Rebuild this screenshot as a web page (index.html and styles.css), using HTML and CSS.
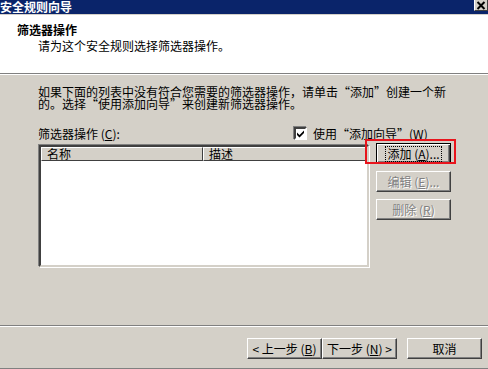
FILE: index.html
```html
<!DOCTYPE html>
<html lang="zh-CN">
<head>
    <meta charset="UTF-8">
    <title>安全规则向导</title>
    <link rel="stylesheet" href="styles.css">
</head>
<body>
    <div class="window">
        <div class="titlebar">
            <span class="title-text">安全规则向导</span>
            <span class="close-btn">
                <svg width="10" height="9" viewBox="0 0 10 9"><path d="M1.5 1 L8.5 8 M8.5 1 L1.5 8" stroke="#000" stroke-width="2" fill="none"/></svg>
            </span>
        </div>

        <div class="header">
            <div class="header-title">筛选器操作</div>
            <div class="header-sub">请为这个安全规则选择筛选器操作。</div>
        </div>

        <div class="content">
            <p class="intro">如果下面的列表中没有符合您需要的筛选器操作，请单击<span class="q q-open">“</span>添加<span class="q q-close">”</span>创建一个新<br>的。选择<span class="q q-open">“</span>使用添加向导<span class="q q-close">”</span>来创建新筛选器操作。</p>

            <div class="label-row">
                <span class="list-label">筛选器操作 (<u>C</u>):</span>
                <span class="check-group">
                    <span class="checkbox">
                        <svg width="9" height="9" viewBox="0 0 9 9"><path d="M1 3.5 L3.5 6 L8 1.5 L8 4 L3.5 8.5 L1 6 Z" fill="#000"/></svg>
                    </span>
                    <span>使用<span class="q q-open">“</span>添加向导<span class="q q-close">”</span>(<u>W</u>)</span>
                </span>
            </div>

            <div class="list-row">
                <div class="listbox">
                    <div class="list-head">
                        <div class="col col-name">名称</div>
                        <div class="col col-desc">描述</div>
                    </div>
                </div>
                <div class="side-buttons">
                    <div class="highlight"></div>
                    <button class="btn btn-default"><span class="focus">添加 (<u>A</u>)...</span></button>
                    <button class="btn" disabled>编辑 (<u>E</u>)...</button>
                    <button class="btn" disabled>删除 (<u>R</u>)</button>
                </div>
            </div>
        </div>

        <div class="footer">
            <button class="btn">&lt; 上一步 (<u>B</u>)</button>
            <button class="btn">下一步 (<u>N</u>) &gt;</button>
            <button class="btn btn-cancel">取消</button>
        </div>
    </div>
</body>
</html>
```

FILE: styles.css
```css
body {
    margin: 0;
    font-family: "Noto Sans CJK SC", sans-serif;
    font-size: 12px;
    color: #000;
    background-color: #d4d0c8;
}

.window {
    width: 488px;
    height: 369px;
    display: flex;
    flex-direction: column;
    overflow: hidden;
}

.titlebar {
    height: 14px;
    background-color: #0a246a;
    border-bottom: 1px solid #d4d0c8;
    display: flex;
    justify-content: space-between;
    align-items: flex-start;
}

.title-text {
    color: #fff;
    font-weight: bold;
    line-height: 14px;
}

.close-btn {
    width: 12px;
    height: 10px;
    background-color: #d4d0c8;
    border-right: 1px solid #404040;
    border-bottom: 1px solid #404040;
    border-left: 1px solid #fff;
    display: flex;
    align-items: center;
    justify-content: center;
}

.header {
    height: 59px;
    box-sizing: border-box;
    padding-top: 9px;
    background-color: #fff;
    border-bottom: 1px solid #808080;
    box-shadow: 0 1px 0 #fff;
    margin-bottom: 1px;
}

.header-title {
    font-weight: bold;
    line-height: 12px;
    padding-left: 17px;
}

.header-sub {
    line-height: 12px;
    margin-top: 4px;
    padding-left: 38px;
}

.content {
    flex: 1;
    padding: 11px 0 0 38px;
    border-bottom: 1px solid #808080;
    box-shadow: 0 1px 0 #fff;
    margin-bottom: 1px;
}

.intro {
    margin: 0;
    line-height: 12px;
    white-space: nowrap;
}

.q {
    display: inline-block;
    width: 12px;
    line-height: 12px;
}

.q-open {
    text-align: right;
}

.q-close {
    text-align: left;
}

.label-row {
    display: flex;
    align-items: center;
    margin-top: 17px;
    height: 13px;
    line-height: 12px;
}

.list-label {
    width: 255px;
}

.check-group {
    display: flex;
    align-items: center;
    gap: 5px;
}

.checkbox {
    width: 9px;
    height: 9px;
    margin: 1px;
    background-color: #fff;
    border-top: 2px solid #404040;
    border-left: 2px solid #404040;
    border-right: 2px solid #fff;
    border-bottom: 2px solid #fff;
    box-shadow: -1px -1px 0 #808080, 1px 1px 0 #d4d0c8;
    display: flex;
}

.list-row {
    display: flex;
    margin-top: 3px;
}

.listbox {
    width: 326px;
    height: 118px;
    margin-top: 2px;
    margin-left: 1px;
    background-color: #fff;
    border-top: 2px solid #404040;
    border-left: 2px solid #404040;
    border-right: 2px solid #d4d0c8;
    border-bottom: 2px solid #d4d0c8;
    box-shadow: -1px -1px 0 #808080, 1px 1px 0 #fff;
}

.list-head {
    display: flex;
    height: 14px;
    line-height: 12px;
}

.col {
    box-sizing: border-box;
    padding-left: 5px;
    background-color: #d4d0c8;
    border-top: 1px solid #fff;
    border-left: 1px solid #fff;
    border-right: 1px solid #404040;
    border-bottom: 1px solid #404040;
}

.col-name {
    width: 162px;
}

.col-desc {
    flex: 1;
}

.side-buttons {
    position: relative;
    margin-left: 7px;
    display: flex;
    flex-direction: column;
    gap: 7px;
}

.highlight {
    position: absolute;
    left: -11px;
    top: -4px;
    width: 87px;
    height: 21px;
    border: 2px solid #e8141c;
}

.btn {
    width: 75px;
    height: 21px;
    padding: 0;
    font-family: "Noto Sans CJK SC", sans-serif;
    font-size: 12px;
    line-height: 12px;
    color: #000;
    background-color: #d4d0c8;
    border-top: 1px solid #fff;
    border-left: 1px solid #fff;
    border-right: 1px solid #404040;
    border-bottom: 1px solid #404040;
    box-shadow: inset -1px -1px 0 #808080;
    display: flex;
    align-items: center;
    justify-content: center;
    white-space: nowrap;
}

.btn:disabled {
    color: #808080;
    text-shadow: 1px 1px 0 #fff;
}

.btn-default {
    border: 1px solid #000;
    box-shadow: inset 1px 1px 0 #fff, inset -1px -1px 0 #404040, inset -2px -2px 0 #808080;
}

.focus {
    border: 1px dotted #000;
    padding: 1px 1px;
}

.footer {
    height: 42px;
    box-sizing: border-box;
    display: flex;
    justify-content: flex-end;
    padding: 11px 6px 0 0;
    border-bottom: 1px solid #808080;
}

.btn-cancel {
    margin-left: 10px;
}
```
